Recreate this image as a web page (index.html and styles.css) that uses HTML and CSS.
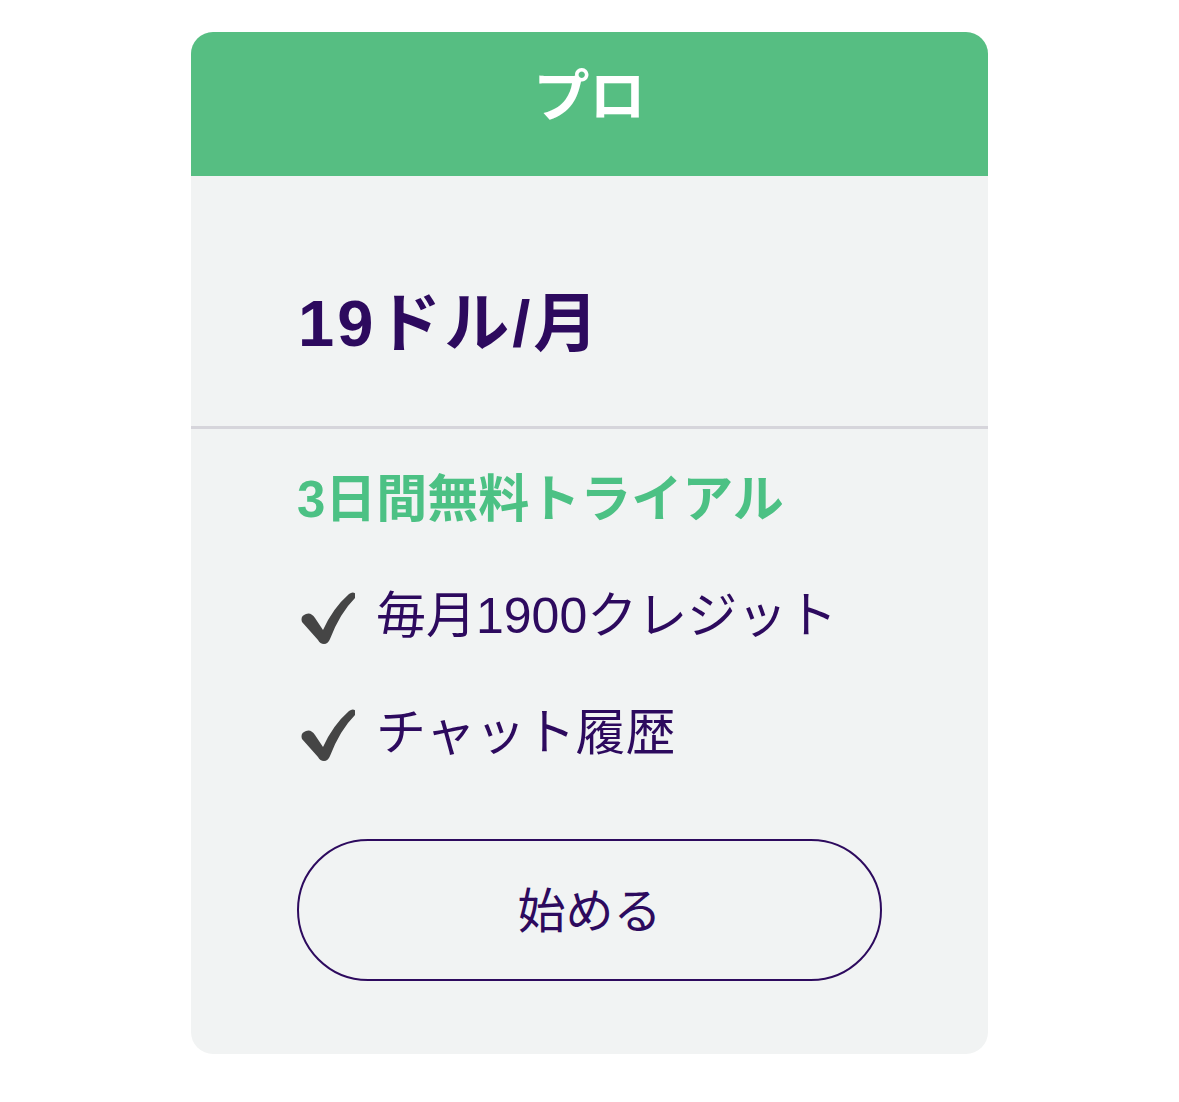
FILE: index.html
```html
<!DOCTYPE html>
<html lang="ja">
<head>
<meta charset="utf-8">
<link rel="stylesheet" href="styles.css">
</head>
<body>
<div class="card">
  <div class="card-header">プロ</div>
  <div class="price-block">
    <div class="price">19ドル/月</div>
  </div>
  <div class="divider"></div>
  <div class="details">
    <div class="trial">3日間無料トライアル</div>
    <ul class="features">
      <li class="feature">
        <svg class="check" viewBox="0 0 56 54" width="56" height="54"><path d="M3,31 Q1,25 7,23 Q12,21 16,27 L24,39 Q34,17 50,3 Q54,0 57,3 L56,7 Q41,22 31,48 Q29,53 25,53 Q21,53 19,49 Z" fill="#454545"/></svg>
        <span>毎月1900クレジット</span>
      </li>
      <li class="feature">
        <svg class="check" viewBox="0 0 56 54" width="56" height="54"><path d="M3,31 Q1,25 7,23 Q12,21 16,27 L24,39 Q34,17 50,3 Q54,0 57,3 L56,7 Q41,22 31,48 Q29,53 25,53 Q21,53 19,49 Z" fill="#454545"/></svg>
        <span>チャット履歴</span>
      </li>
    </ul>
    <button class="start-btn">始める</button>
  </div>
</div>
</body>
</html>
```

FILE: styles.css
```css
* { box-sizing: border-box; }
body {
  margin: 0;
  background: #ffffff;
  font-family: "Liberation Sans", "Noto Sans CJK JP", sans-serif;
}
.card {
  width: 797px;
  margin: 32px 0 0 191px;
  background: #f1f3f3;
  border-radius: 22px;
  overflow: hidden;
  height: 1022px;
}
.card-header {
  height: 144px;
  background: #56be82;
  color: #ffffff;
  font-weight: 700;
  font-size: 56px;
  display: flex;
  align-items: center;
  justify-content: center;
  line-height: 1;
  padding-bottom: 14px;
}
.price-block {
  height: 250px;
  padding-left: 107px;
  display: flex;
  align-items: center;
}
.price {
  font-size: 65px;
  font-weight: 700;
  color: #2d0a5e;
  line-height: 1;
  letter-spacing: 3px;
  padding-top: 44px;
}
.divider {
  height: 3px;
  background: #d6d5db;
}
.details {
  padding: 45px 107px 0 106px;
}
.trial {
  font-size: 51px;
  font-weight: 700;
  color: #4cc184;
  line-height: 1;
}
.features {
  list-style: none;
  margin: 62px 0 0 0;
  padding: 0;
  display: flex;
  flex-direction: column;
  gap: 59px;
}
.feature {
  display: flex;
  align-items: center;
  gap: 21px;
  font-size: 50px;
  color: #2d0a5e;
  line-height: 1;
}
.check { flex: none; margin-left: 2px; margin-top: 4px; }
.start-btn {
  margin-top: 77px;
  width: 585px;
  height: 142px;
  border: 2px solid #2d0a5e;
  border-radius: 71px;
  background: transparent;
  color: #2d0a5e;
  font-family: inherit;
  font-size: 48px;
  display: flex;
  align-items: center;
  justify-content: center;
  padding: 0 0 6px 0;
}
```
